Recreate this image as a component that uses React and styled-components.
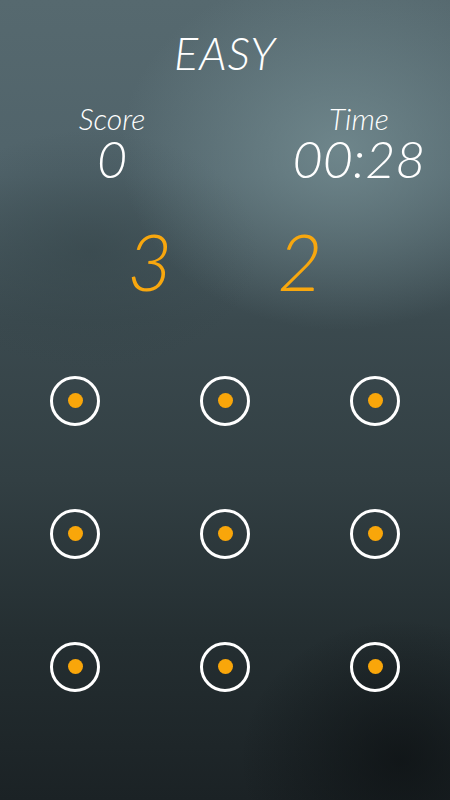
import React from "react";
import styled, { createGlobalStyle } from "styled-components";

const Global = createGlobalStyle`
  html, body { margin: 0; padding: 0; height: 100%; }
  body { background: #2c383c; }
  #root { height: 100%; }
`;

const Screen = styled.div`
  width: 450px;
  height: 800px;
  overflow: hidden;
  display: flex;
  flex-direction: column;
  font-family: Lato, "Open Sans", sans-serif;
  font-style: italic;
  font-weight: 300;
  color: #ffffff;
  background:
    radial-gradient(ellipse 220px 180px at 340px 150px, rgba(120,145,150,0.75), rgba(120,145,150,0) 100%),
    radial-gradient(ellipse 160px 140px at 400px 760px, rgba(12,16,18,0.7), rgba(12,16,18,0) 100%),
    radial-gradient(ellipse 170px 120px at 90px 250px, rgba(50,66,70,0.5), rgba(50,66,70,0) 100%),
    linear-gradient(180deg, #56696f 0%, #50636a 22%, #3b4a4f 40%, #323f43 60%, #242e31 80%, #1b2225 100%);
`;

const Title = styled.h1`
  margin: 30px 0 0;
  text-align: center;
  font-size: 45px;
  font-weight: 300;
  line-height: 46px;
  letter-spacing: 1px;
`;

const Stats = styled.div`
  display: grid;
  grid-template-columns: 224px 1fr;
  margin-top: 27px;
  padding-right: 6px;
`;

const Stat = styled.div`
  display: flex;
  flex-direction: column;
  align-items: center;
  padding-left: ${p => (p.$offset ? "50px" : "0")};
`;

const Label = styled.div`
  font-size: 30px;
  line-height: 30px;
`;

const Value = styled.div`
  font-size: 52px;
  line-height: 50px;
`;

const Countdown = styled.div`
  display: flex;
  justify-content: center;
  gap: 105px;
  margin-top: 38px;
  color: #f8a70e;
  font-size: 78px;
  line-height: 80px;
  font-weight: 300;
`;

const Grid = styled.div`
  display: grid;
  grid-template-columns: repeat(3, 150px);
  grid-auto-rows: 133px;
  margin-top: 33px;
`;

const Cell = styled.div`
  display: flex;
  align-items: center;
  justify-content: center;
`;

const Ring = styled.div`
  width: 44px;
  height: 44px;
  border: 3px solid #ffffff;
  border-radius: 50%;
  display: flex;
  align-items: center;
  justify-content: center;
`;

const Dot = styled.div`
  width: 15px;
  height: 15px;
  border-radius: 50%;
  background: #f9a60a;
`;

export default function App() {
  return (
    <Screen>
      <Global />
      <Title>EASY</Title>
      <Stats>
        <Stat>
          <Label>Score</Label>
          <Value>0</Value>
        </Stat>
        <Stat $offset>
          <Label>Time</Label>
          <Value>00:28</Value>
        </Stat>
      </Stats>
      <Countdown>
        <span>3</span>
        <span>2</span>
      </Countdown>
      <Grid>
        {Array.from({ length: 9 }).map((_, i) => (
          <Cell key={i}>
            <Ring>
              <Dot />
            </Ring>
          </Cell>
        ))}
      </Grid>
    </Screen>
  );
}
